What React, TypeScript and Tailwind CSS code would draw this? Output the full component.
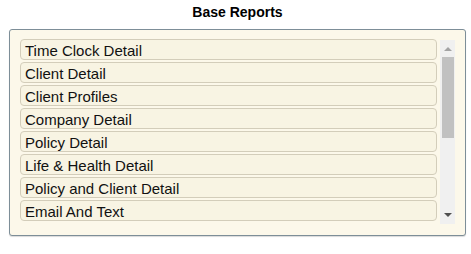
const reports = [
  "Time Clock Detail",
  "Client Detail",
  "Client Profiles",
  "Company Detail",
  "Policy Detail",
  "Life & Health Detail",
  "Policy and Client Detail",
  "Email And Text",
];

function ScrollTrack() {
  return (
    <div className="w-[15px] h-[184px] mt-[1px] bg-[#f0f0f0] flex flex-col items-center pt-[7px] pb-[7px]">
      <div className="w-0 h-0 border-l-[4px] border-r-[4px] border-b-[4px] border-l-transparent border-r-transparent border-b-[#a3a3a3]" />
      <div className="mt-[6px] w-[12px] h-[81px] bg-[#c1c1c1]" />
      <div className="flex-1" />
      <div className="w-0 h-0 border-l-[4px] border-r-[4px] border-t-[4px] border-l-transparent border-r-transparent border-t-[#505050]" />
    </div>
  );
}

export default function App() {
  return (
    <div className="w-[471px] h-[254px] bg-white font-['Liberation_Sans',Arial,sans-serif]">
      <div className="w-[457px] ml-[9px] pt-[2px] text-center text-[14px] leading-[20px] font-bold text-black">
        Base Reports
      </div>
      <div className="ml-[9px] mt-[7px] w-[457px] h-[207px] border border-[#7d8e98] rounded-[3px] bg-[#fcf8ea] shadow-[0_1px_1px_rgba(0,0,0,0.15)] pl-[10px] pt-[9px]">
        <div className="flex gap-[3px]">
          <ul className="w-[417px] h-[185px] overflow-hidden flex flex-col gap-[2px]">
            {reports.map((r) => (
              <li
                key={r}
                className="h-[21px] shrink-0 border border-[#d3cdba] rounded-[4px] bg-[#f8f4e3] pl-[4px] pt-[2px] text-[15px] leading-[17px] text-[#111] cursor-pointer"
              >
                {r}
              </li>
            ))}
          </ul>
          <ScrollTrack />
        </div>
      </div>
    </div>
  );
}
